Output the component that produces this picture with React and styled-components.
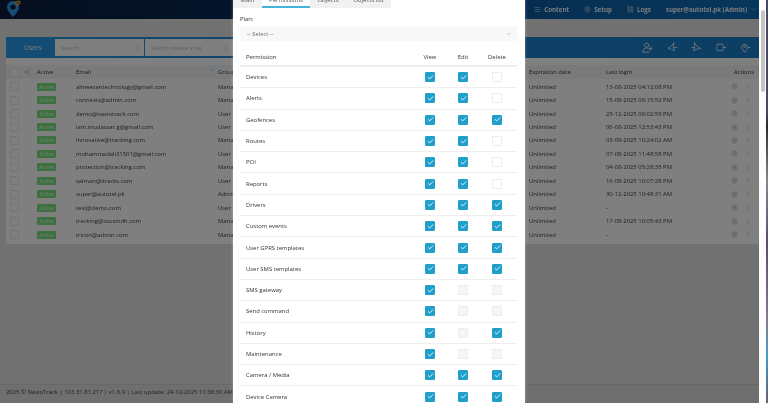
import styled, { createGlobalStyle } from "styled-components";
import { Check, ChevronDown, ChevronRight, ChevronUp, LayoutGrid, Menu, Search, Settings, Share2, User } from "lucide-react";

const GlobalStyle = createGlobalStyle`
    html, body {
        margin: 0;
        padding: 0;
        height: 100%;
        overflow: hidden;
        background: #fff;
    }
    * {
        box-sizing: border-box;
    }
`;

const Shell = styled.div`
    display: flex;
    width: 768px;
    height: 403px;
    overflow: hidden;
    font-family: "Open Sans", "Liberation Sans", sans-serif;
    filter: blur(0.5px);
`;

const Page = styled.div`
    position: relative;
    display: flex;
    flex-direction: column;
    width: 759px;
    height: 403px;
    overflow: hidden;
    background: #e2e2e2;
`;

const ScrollTrack = styled.div`
    width: 7px;
    padding: 10px 1px 0 2px;
    background: #fdfdfd;
`;

const ScrollThumb = styled.div`
    height: 82px;
    border-radius: 2px;
    background: #c4c4c4;
`;

const DesktopStrip = styled.div`
    width: 2px;
    background: linear-gradient(180deg, #4c4766 0%, #4c4766 28%, #2c2a30 31%, #8d8494 45%, #5f4c68 60%, #8b7a90 80%, #3f9fd0 88%, #6c5a70 100%);
`;

const Navbar = styled.header`
    display: flex;
    align-items: center;
    gap: 15px;
    flex: 0 0 19px;
    padding: 0 2px 0 6px;
    background: linear-gradient(90deg, #081c3c 0%, #0a2c5c 40%, #0d62a8 75%, #0f6cb8 100%);
`;

const Logo = styled.svg`
    flex: none;
    width: 15px;
    height: 17px;
    margin-top: -2px;
`;

const Brand = styled.span`
    margin-right: auto;
    font-size: 6px;
    font-weight: 700;
    color: #0d2748;
`;

const NavItem = styled.span`
    display: flex;
    align-items: center;
    gap: 3px;
    font-size: 6.2px;
    font-weight: 700;
    white-space: nowrap;
    color: #f0f6fc;

    svg {
        width: 7px;
        height: 7px;
        color: #c2d4e4;
    }
`;

const Main = styled.main`
    padding: 18px 0 0 6px;
`;

const Card = styled.section`
    padding-bottom: 3px;
    background: #fff;
    border-radius: 1px;
`;

const CardBar = styled.div`
    display: flex;
    align-items: center;
    height: 21px;
    padding: 0 8px 0 9px;
    background: linear-gradient(90deg, #2a9aea 0%, #1d82ce 40%, #1a7ec8 100%);
`;

const CardTitle = styled.span`
    display: flex;
    align-items: center;
    gap: 3px;
    width: 40px;
    font-size: 6.7px;
    color: #f0f6fc;

    svg {
        width: 6px;
        height: 6px;
        color: #3f8fd0;
    }
`;

const SearchBox = styled.div`
    display: flex;
    align-items: center;
    justify-content: space-between;
    width: 89px;
    height: 17px;
    margin-right: 1px;
    padding: 0 5px 0 6px;
    background: #fff;
    font-size: 5.8px;
    color: #bcbcbc;

    svg {
        width: 6px;
        height: 6px;
        color: #d0d0d0;
    }
`;

const BarIcons = styled.div`
    display: flex;
    gap: 13.4px;
    margin-left: auto;
`;

const BarIcon = styled.svg`
    width: 11px;
    height: 11px;
    fill: none;
    stroke: #e8f2fa;
    stroke-width: 0.9;
    stroke-linecap: round;
    stroke-linejoin: round;
`;

const Row = styled.div`
    display: grid;
    grid-template-columns: 31px 39px 142px 311px 77px 103px 50px;
    align-items: center;
    height: ${(p) => (p.$head ? 14 : 13.45)}px;
    margin-top: ${(p) => (p.$head ? 7 : 0)}px;
    margin-bottom: ${(p) => (p.$head ? 1 : 0)}px;
    background: ${(p) => (p.$head ? "#f2f4f7" : "transparent")};
    font-size: 5.9px;
    color: #3c3c3c;
`;

const Cell = styled.span`
    white-space: nowrap;
`;

const HeadCell = styled.span`
    display: flex;
    align-items: center;
    justify-content: space-between;
    padding-right: 3px;
    white-space: nowrap;
    color: #333;
`;

const RightHead = styled(HeadCell)`
    justify-content: flex-end;
    padding-right: 5px;
`;

const SortArrows = styled.span`
    display: flex;
    flex-direction: column;
    align-items: center;

    svg {
        display: block;
        width: 5px;
        height: 5px;
        color: #d8d8d8;
    }
    svg:first-child {
        color: ${(p) => (p.$active ? "#2f8fd8" : "#d8d8d8")};
    }
`;

const SelectCell = styled.span`
    display: flex;
    align-items: center;
    gap: 5px;
    padding-left: 4px;

    svg {
        width: 6px;
        height: 6px;
        color: #b8b8b8;
    }
`;

const TickBox = styled.span`
    display: block;
    width: 9px;
    height: 9px;
    border: 1px solid #e8e8e8;
    border-radius: 1px;
    background: #fff;
`;

const Badge = styled.span`
    display: inline-block;
    width: 19px;
    height: 8px;
    border-radius: 1px;
    background: #78e07c;
    font-size: 5px;
    line-height: 8px;
    text-align: center;
    color: #e8ffe8;
`;

const RowActions = styled.span`
    display: flex;
    align-items: center;
    justify-content: flex-end;
    gap: 7px;
    padding-right: 7px;

    svg {
        width: 7px;
        height: 7px;
        color: #a8a8a8;
    }
`;

const Footer = styled.footer`
    margin-top: auto;
    height: 19px;
    padding: 3px 6px 0;
    border-top: 1px solid #d0d0d0;
    background: #dedede;
    font-size: 5.9px;
    white-space: nowrap;
    color: #444;
`;

const Backdrop = styled.div`
    position: absolute;
    inset: 0;
    background: rgba(0, 0, 0, 0.5);
`;

const Modal = styled.div`
    position: absolute;
    top: -8px;
    bottom: 0;
    left: 233px;
    width: 292px;
    overflow: hidden;
    background: #fff;
    box-shadow: 0 0 3px rgba(255, 255, 255, 0.35);
`;

const Tabs = styled.nav`
    display: flex;
    width: 158px;
    height: 16px;
    margin-bottom: 7px;
    background: #f1f1f1;
`;

const Tab = styled.span`
    display: flex;
    align-items: flex-start;
    justify-content: center;
    width: ${(p) => p.$width}px;
    padding-top: 4px;
    border-bottom: 2px solid ${(p) => (p.$active ? "#45b4d8" : "transparent")};
    background: ${(p) => (p.$active ? "#fff" : "transparent")};
    font-size: 6px;
    color: #555;
`;

const ModalBody = styled.div`
    padding: 0 8px 0 7px;
`;

const FieldLabel = styled.label`
    display: block;
    height: 11px;
    font-size: 5.9px;
    line-height: 9px;
    color: #333;
`;

const SelectBox = styled.div`
    display: flex;
    align-items: center;
    justify-content: space-between;
    height: 15px;
    margin-bottom: 8px;
    padding: 0 5px 0 7px;
    background: #f8f8f8;
    font-size: 5.8px;
    color: #666;

    svg {
        width: 6px;
        height: 6px;
        color: #999;
    }
`;

const PermRow = styled.div`
    display: grid;
    grid-template-columns: 1fr 32px 34px 34px;
    align-items: center;
    justify-items: center;
    height: ${(p) => (p.$head ? 18 : 21.3)}px;
    padding: 0 3px 0 6px;
    border-bottom: ${(p) => (p.$head ? 2 : 1)}px solid #eeeeee;
    font-size: 5.9px;
    color: #333;
`;

const PermName = styled.span`
    justify-self: start;
`;

const PermBox = styled.span`
    display: flex;
    align-items: center;
    justify-content: center;
    width: 10px;
    height: 10px;
    border-radius: 1px;
    border: 1px solid ${(p) => (p.$state === "on" ? "#1f9fc9" : "#ececec")};
    background: ${(p) => (p.$state === "on" ? "#1f9fc9" : p.$state === "off" ? "#f6f6f6" : "#fff")};

    svg {
        width: 7px;
        height: 7px;
        color: #fff;
        stroke-width: 3;
    }
`;

const users = [
    ["almeezantechnology@gmail.com", "Manager", "13-08-2025 04:12:08 PM"],
    ["connexis@admin.com", "Manager", "15-08-2025 06:15:52 PM"],
    ["demo@naviotrack.com", "User", "25-12-2025 06:02:59 PM"],
    ["iam.mudassar.g@gmail.com", "User", "06-08-2025 12:53:43 PM"],
    ["innovative@tracking.com", "Manager", "03-09-2025 10:24:02 AM"],
    ["muhammadali31501@gmail.com", "User", "07-08-2025 11:48:58 PM"],
    ["protection@tracking.com", "Manager", "04-08-2025 05:28:35 PM"],
    ["salman@itracks.com", "User", "16-08-2025 10:07:28 PM"],
    ["super@autotel.pk", "Admin", "30-12-2025 10:48:31 AM"],
    ["test@demo.com", "User", "-"],
    ["tracking@ssusindh.com", "Manager", "17-08-2025 10:05:43 PM"],
    ["tricon@admin.com", "Manager", "-"],
];

// y = ticked, n = empty, x = disabled
const permissions = [
    ["Devices", "yyn"],
    ["Alerts", "yyn"],
    ["Geofences", "yyy"],
    ["Routes", "yyn"],
    ["POI", "yyn"],
    ["Reports", "yyn"],
    ["Drivers", "yyy"],
    ["Custom events", "yyy"],
    ["User GPRS templates", "yyy"],
    ["User SMS templates", "yyy"],
    ["SMS gateway", "yxx"],
    ["Send command", "yxx"],
    ["History", "yxy"],
    ["Maintenance", "yxx"],
    ["Camera / Media", "yyy"],
    ["Device Camera", "yyy"],
];

const boxState = { y: "on", n: "empty", x: "off" };

const Sort = ({ active }) => (
    <SortArrows $active={active}>
        <ChevronUp />
        <ChevronDown />
    </SortArrows>
);

const App = () => {
    return (
        <Shell>
            <GlobalStyle />
            <Page>
                <Navbar>
                    <Logo viewBox="0 0 15 17">
                        <path d="M7 1a6 6 0 0 0-6 6c0 4 6 10 6 10s6-6 6-10a6 6 0 0 0-6-6z" fill="#2f9be8" />
                        <circle cx="7" cy="7" r="2.6" fill="#071a38" />
                        <path d="M8 3.500c2-2.500 5-2.500 6-1.500-.5 2-2.500 3-4 3.500" fill="none" stroke="#e0963a" strokeWidth="1.500" />
                    </Logo>
                    <Brand>NavioTrack</Brand>
                    <NavItem><Menu />Content</NavItem>
                    <NavItem><Settings />Setup</NavItem>
                    <NavItem><LayoutGrid />Logs</NavItem>
                    <NavItem>super@autotel.pk (Admin)<ChevronDown /></NavItem>
                </Navbar>
                <Main>
                    <Card>
                        <CardBar>
                            <CardTitle><User />Users</CardTitle>
                            <SearchBox>Search<Search /></SearchBox>
                            <SearchBox>Search device imei<Search /></SearchBox>
                            <BarIcons>
                                <BarIcon viewBox="0 0 12 12">
                                    <circle cx="5" cy="3.500" r="2.300" />
                                    <path d="M1 11c0-3 1.500-4.500 4-4.500s3.500 1 4 2.500M1 11h7M9.500 5.500v3M8 7h3" />
                                </BarIcon>
                                <BarIcon viewBox="0 0 12 12">
                                    <path d="M7.500 1 7 5.500 8 9.500 5 8 1 7 4.500 4.500z M8 6h3" />
                                </BarIcon>
                                <BarIcon viewBox="0 0 12 12">
                                    <path d="M3.500 1 4 5.500 3 9.500 6 8 10.500 7 6.500 4.500z M1 6h3" />
                                </BarIcon>
                                <BarIcon viewBox="0 0 12 12">
                                    <rect x="1" y="2.500" width="7" height="7" rx="1" />
                                    <path d="M8 6h3" />
                                </BarIcon>
                                <BarIcon viewBox="0 0 12 12">
                                    <path d="M5 11 1.500 6a3.500 3.500 0 1 1 7 0zM8.500 6H11" />
                                    <circle cx="5" cy="5" r="1" />
                                </BarIcon>
                            </BarIcons>
                        </CardBar>
                        <Row $head>
                            <SelectCell><TickBox /><Share2 /></SelectCell>
                            <HeadCell>Active<Sort /></HeadCell>
                            <HeadCell>Email<Sort active /></HeadCell>
                            <Cell>Group</Cell>
                            <HeadCell>Expiration date<Sort /></HeadCell>
                            <HeadCell>Last login<Sort /></HeadCell>
                            <RightHead>Actions</RightHead>
                        </Row>
                        {users.map(([email, group, login]) => (
                            <Row key={email}>
                                <SelectCell><TickBox /></SelectCell>
                                <Cell><Badge>Active</Badge></Cell>
                                <Cell>{email}</Cell>
                                <Cell>{group}</Cell>
                                <Cell>Unlimited</Cell>
                                <Cell>{login}</Cell>
                                <RowActions><Settings /><ChevronRight /></RowActions>
                            </Row>
                        ))}
                    </Card>
                </Main>
                <Footer>2025 © NavioTrack | 103.31.81.217 | v1.6.9 | Last update: 24-12-2025 11:38:30 AM</Footer>
                <Backdrop />
                <Modal>
                    <Tabs>
                        <Tab $width={29}>Main</Tab>
                        <Tab $width={48} $active>Permissions</Tab>
                        <Tab $width={36}>Objects</Tab>
                        <Tab $width={45}>Objects list</Tab>
                    </Tabs>
                    <ModalBody>
                        <FieldLabel>Plan:</FieldLabel>
                        <SelectBox>-- Select --<ChevronDown /></SelectBox>
                        <PermRow $head>
                            <PermName>Permission</PermName>
                            <span>View</span>
                            <span>Edit</span>
                            <span>Delete</span>
                        </PermRow>
                        {permissions.map(([name, flags]) => (
                            <PermRow key={name}>
                                <PermName>{name}</PermName>
                                {[...flags].map((flag, i) => (
                                    <PermBox key={i} $state={boxState[flag]}>
                                        {flag === "y" && <Check />}
                                    </PermBox>
                                ))}
                            </PermRow>
                        ))}
                    </ModalBody>
                </Modal>
            </Page>
            <ScrollTrack><ScrollThumb /></ScrollTrack>
            <DesktopStrip />
        </Shell>
    );
};

export default App;
